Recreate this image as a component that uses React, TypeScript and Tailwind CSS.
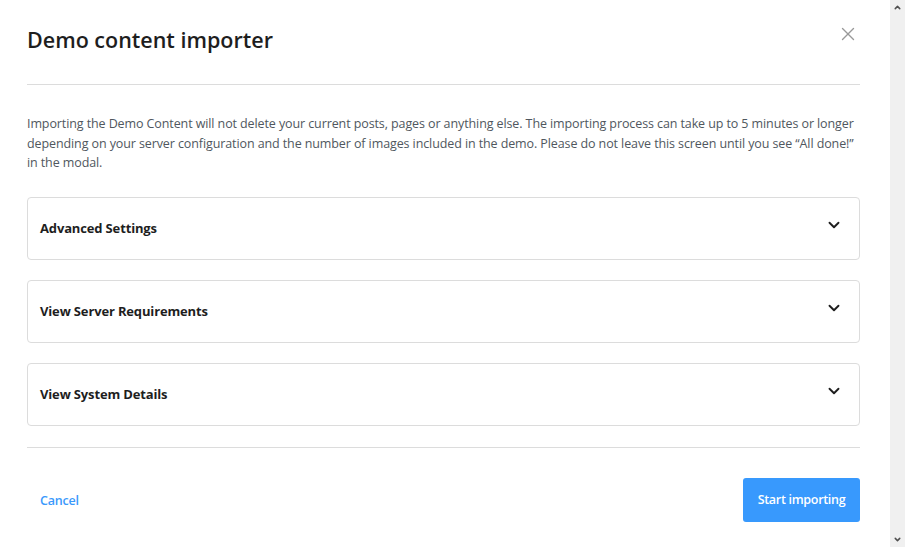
import React from "react";
import { X, ChevronDown, ChevronUp } from "lucide-react";

const sections = ["Advanced Settings", "View Server Requirements", "View System Details"];

export default function App() {
  return (
    <div className="flex h-[547px] w-full overflow-hidden bg-white font-['Open_Sans',sans-serif] text-[#1e1e1e]">
      <div className="flex-1 pl-[27px] pr-[30px]">
        {/* Header */}
        <div className="flex h-[85px] items-center justify-between border-b border-[#dcdcdc]">
          <h1 className="-mt-[4px] text-[21.5px] font-semibold text-[#1e1e1e]">Demo content importer</h1>
          <button className="-mt-[16px] mr-[1px] text-[#999]">
            <X className="h-[22px] w-[22px]" strokeWidth={1.5} />
          </button>
        </div>

        <p className="mt-[29px] text-[12.5px] leading-[19.5px] tracking-[-0.1px] text-[#50575e]">
          Importing the Demo Content will not delete your current posts, pages or anything else. The importing process can take up to 5 minutes or longer depending on your server configuration and the number of images included in the demo. Please do not leave this screen until you see “All done!” in the modal.
        </p>

        <div className="mt-[24px] flex flex-col gap-5 border-b border-[#dcdcdc] pb-[21px]">
          {sections.map((s) => (
            <div key={s} className="flex h-[63px] items-center justify-between rounded-[4px] border border-[#dcdcdc] pl-3 pr-[16px]">
              <span className="mt-[2px] text-[13px] font-bold tracking-[-0.15px] text-[#1e1e1e]">{s}</span>
              <ChevronDown className="-mt-[7px] h-[18px] w-[18px] text-[#1e1e1e]" strokeWidth={2.5} />
            </div>
          ))}
        </div>

        {/* Footer */}
        <div className="flex items-center justify-between pt-[30px]">
          <button className="mt-[3px] pl-[13px] text-[12.5px] font-semibold tracking-[-0.2px] text-[#3a99fc]">Cancel</button>
          <button className="h-[44px] w-[117px] rounded-[3px] bg-[#3899fd] pt-[1px] text-[12.5px] font-semibold tracking-[-0.3px] text-white">Start importing</button>
        </div>
      </div>

      {/* Scrollbar */}
      <div className="flex w-[15px] flex-col items-center justify-between bg-[#f0f0f0] py-[3px]">
        <ChevronUp className="h-[9px] w-[9px] text-[#505050]" strokeWidth={4} />
        <ChevronDown className="h-[9px] w-[9px] text-[#505050]" strokeWidth={4} />
      </div>
    </div>
  );
}
